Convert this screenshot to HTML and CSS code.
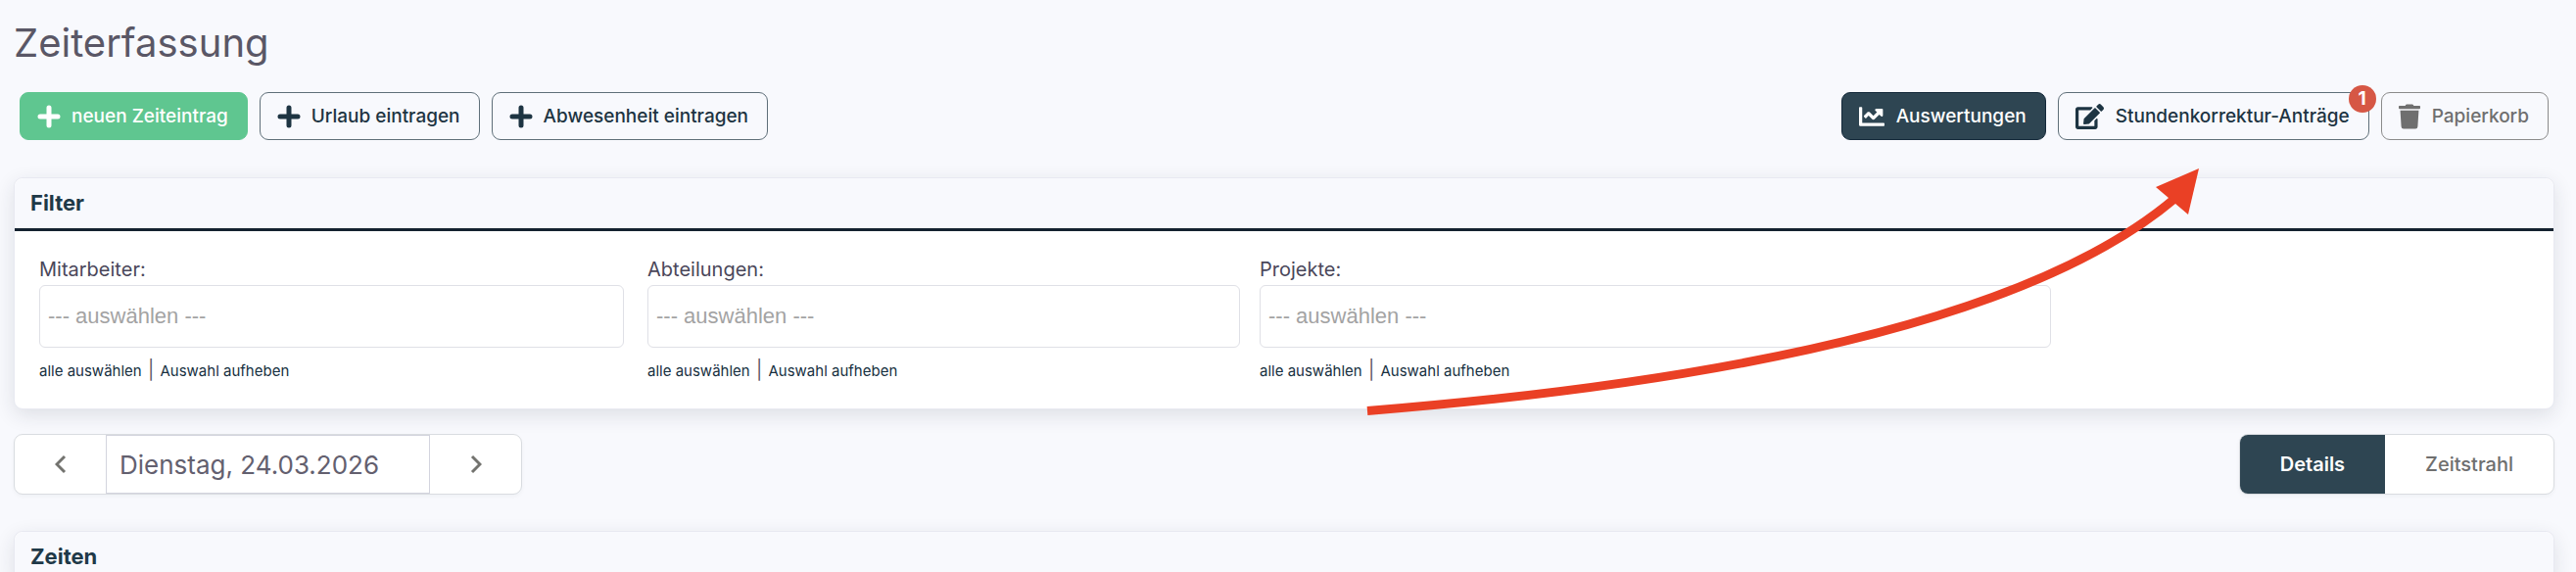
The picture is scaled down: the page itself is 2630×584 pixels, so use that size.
FILE: index.html
```html
<!DOCTYPE html>
<html lang="de">
<head>
<meta charset="utf-8">
<title>Zeiterfassung</title>
<link rel="stylesheet" href="styles.css">
</head>
<body>
<main class="page">
  <h1 class="title">Zeiterfassung</h1>

  <div class="toolbar">
    <button type="button" class="btn btn-success">
      <svg class="icon icon-plus" viewBox="0 0 24 24" aria-hidden="true"><path d="M12 3v18M3 12h18"/></svg>neuen Zeiteintrag
    </button>
    <button type="button" class="btn">
      <svg class="icon icon-plus" viewBox="0 0 24 24" aria-hidden="true"><path d="M12 3v18M3 12h18"/></svg>Urlaub eintragen
    </button>
    <button type="button" class="btn">
      <svg class="icon icon-plus" viewBox="0 0 24 24" aria-hidden="true"><path d="M12 3v18M3 12h18"/></svg>Abwesenheit eintragen
    </button>
    <span class="spacer"></span>
    <button type="button" class="btn btn-dark">
      <svg class="icon icon-chart" viewBox="0 0 512 512" aria-hidden="true"><path d="M496 384H64V80c0-8.840-7.160-16-16-16H16C7.160 64 0 71.160 0 80v336c0 17.670 14.330 32 32 32h464c8.840 0 16-7.160 16-16v-32c0-8.840-7.160-16-16-16zM464 96H345.940c-21.380 0-32.090 25.850-16.970 40.970l32.400 32.400L288 242.750l-73.370-73.370c-12.500-12.500-32.760-12.500-45.250 0l-68.690 68.690c-6.250 6.250-6.250 16.380 0 22.630l22.620 22.620c6.250 6.250 16.380 6.250 22.630 0L192 237.250l73.370 73.370c12.500 12.500 32.760 12.500 45.250 0l96-96 32.400 32.400c15.120 15.120 40.970 4.410 40.970-16.970V112c.010-8.840-7.150-16-15.990-16z"/></svg>Auswertungen
    </button>
    <button type="button" class="btn">
      <svg class="icon icon-edit" viewBox="0 0 576 512" aria-hidden="true"><path d="M402.600 83.200l90.200 90.200c3.800 3.800 3.800 10 0 13.800L274.400 405.600l-92.800 10.300c-12.400 1.400-22.900-9.100-21.500-21.500l10.300-92.800L388.800 83.200c3.800-3.800 10-3.800 13.800 0zm162-22.900l-48.800-48.800c-15.200-15.200-39.900-15.200-55.200 0l-35.400 35.400c-3.800 3.800-3.800 10 0 13.800l90.200 90.200c3.800 3.800 10 3.800 13.800 0l35.400-35.400c15.200-15.300 15.200-40 0-55.200zM384 346.200V448H64V128h229.800c3.200 0 6.200-1.300 8.500-3.500l40-40c7.600-7.600 2.200-20.500-8.500-20.500H48C21.500 64 0 85.500 0 112v352c0 26.500 21.500 48 48 48h352c26.500 0 48-21.500 48-48V306.200c0-10.700-12.900-16-20.500-8.500l-40 40c-2.200 2.300-3.500 5.300-3.500 8.500z"/></svg>Stundenkorrektur-Anträge
      <span class="badge">1</span>
    </button>
    <button type="button" class="btn btn-muted">
      <svg class="icon icon-trash" viewBox="0 0 448 512" aria-hidden="true"><path d="M432 32H312l-9.400-18.700A24 24 0 0 0 281.100 0H166.800a23.720 23.720 0 0 0-21.400 13.300L136 32H16A16 16 0 0 0 0 48v32a16 16 0 0 0 16 16h416a16 16 0 0 0 16-16V48a16 16 0 0 0-16-16zM32 128l21.200 339a48 48 0 0 0 47.900 45h245.800a48 48 0 0 0 47.900-45L416 128z"/></svg>Papierkorb
    </button>
  </div>

  <section class="card">
    <h2 class="card-head card-head-ruled">Filter</h2>
    <div class="filters">
      <div class="field">
        <label for="mitarbeiter">Mitarbeiter:</label>
        <input id="mitarbeiter" type="text" placeholder="--- auswählen ---">
        <p class="links"><a href="#">alle auswählen</a> <span class="sep">|</span> <a href="#">Auswahl aufheben</a></p>
      </div>
      <div class="field">
        <label for="abteilungen">Abteilungen:</label>
        <input id="abteilungen" type="text" placeholder="--- auswählen ---">
        <p class="links"><a href="#">alle auswählen</a> <span class="sep">|</span> <a href="#">Auswahl aufheben</a></p>
      </div>
      <div class="field">
        <label for="projekte">Projekte:</label>
        <input id="projekte" type="text" placeholder="--- auswählen ---">
        <p class="links"><a href="#">alle auswählen</a> <span class="sep">|</span> <a href="#">Auswahl aufheben</a></p>
      </div>
    </div>
  </section>

  <div class="daybar">
    <div class="group">
      <button type="button" class="step" aria-label="Vorheriger Tag"><svg class="chevron" viewBox="0 0 12 20" aria-hidden="true"><path d="M10 2L2 10l8 8"/></svg></button>
      <input class="date" type="text" aria-label="Datum" value="Dienstag, 24.03.2026">
      <button type="button" class="step" aria-label="Nächster Tag"><svg class="chevron" viewBox="0 0 12 20" aria-hidden="true"><path d="M2 2l8 8-8 8"/></svg></button>
    </div>
    <div class="group">
      <button type="button" class="tab tab-active">Details</button>
      <button type="button" class="tab">Zeitstrahl</button>
    </div>
  </div>

  <section class="card">
    <h2 class="card-head">Zeiten</h2>
  </section>

  <svg class="arrow" viewBox="1390 165 860 265" aria-hidden="true">
    <path class="arrow-line" d="M1396 419.500Q2024 369 2220 203"/>
    <path class="arrow-head" d="M2245 172L2201 191L2234 219Z"/>
  </svg>
</main>
</body>
</html>
```
FILE: styles.css
```css
* { box-sizing: border-box; }

body {
  margin: 0;
  background: #f8f9fd;
  color: #5a5766;
  font-family: Inter, "Liberation Sans", sans-serif;
  font-size: 20px;
}

button, input { font: inherit; color: inherit; margin: 0; }

.page {
  position: relative;
  min-height: 100vh;
  padding: 18px 22px 0 14px;
  overflow: hidden;
}

.title {
  margin: 0 0 24px;
  font-size: 40px;
  font-weight: 400;
  line-height: 52px;
}

.toolbar {
  display: flex;
  gap: 12px;
  padding: 0 6px;
  margin-bottom: 38px;
}

.spacer { flex: 1; }

.btn {
  position: relative;
  display: flex;
  align-items: center;
  height: 49px;
  padding: 0 19px 0 17px;
  border: 1px solid #5f6f79;
  border-radius: 9px;
  background: transparent;
  color: #1d3442;
  font-size: 19px;
  font-weight: 500;
  white-space: nowrap;
}

.btn-success { background: #5fc690; border-color: #5fc690; color: #fff; }
.btn-dark { background: #2e4552; border-color: #14293a; color: #fff; }
.btn-muted { border-color: #8b8b8b; color: #6f6f6f; }

.icon { height: 26px; margin-right: 12px; fill: currentColor; }
.icon-plus { width: 24px; height: 24px; margin-right: 11px; stroke: currentColor; stroke-width: 5; stroke-linecap: round; }
.icon-chart { width: 26px; }
.icon-edit { width: 29px; }
.icon-trash { width: 22px; }

.badge {
  position: absolute;
  top: -8px;
  right: -8px;
  width: 28px;
  height: 28px;
  border-radius: 50%;
  background: #d65745;
  color: #fff;
  font-size: 19px;
  font-weight: 700;
  line-height: 27px;
  text-align: center;
}

.card {
  border: 1px solid #e8e9f1;
  border-radius: 9px;
  background: #fff;
  box-shadow: 0 6px 20px rgba(30, 40, 60, 0.12);
}

.card-head {
  margin: 0;
  padding: 0 16px;
  border-radius: 9px 9px 0 0;
  background: #f8f9fd;
  color: #1f3948;
  font-size: 22px;
  font-weight: 700;
  line-height: 51px;
}

.card-head-ruled { border-bottom: 3px solid #142230; }

.filters {
  display: grid;
  grid-template-columns: 621fr 625fr 828fr 469fr;
  padding: 25px 24px 24px 25px;
}

.field { margin-right: 20px; }
.field:first-child { margin-right: 24px; }

.field label {
  display: block;
  margin-bottom: 2px;
  font-size: 20px;
  line-height: 28px;
  color: #4a475a;
}

.field input {
  display: block;
  width: 100%;
  height: 64px;
  padding: 0 8px;
  border: 1px solid #dfe0e6;
  border-radius: 6px;
  background: #fff;
  font-family: "Liberation Sans", Arial, sans-serif;
  font-size: 22px;
}

.field input::placeholder { color: #a3a3a3; opacity: 1; }

.links { margin: 9px 0 0; font-size: 15px; line-height: 28px; }
.links a { color: #17303f; text-decoration: none; }
.sep { margin: 0 2px; font-size: 19px; }

.daybar {
  display: flex;
  justify-content: space-between;
  margin: 25px 0 37px;
}

.group {
  display: flex;
  height: 62px;
  border: 1px solid #d9dce0;
  border-radius: 9px;
  background: #fff;
  overflow: hidden;
  box-shadow: 0 2px 4px rgba(30, 40, 60, 0.04);
}

.step, .tab {
  display: flex;
  align-items: center;
  justify-content: center;
  border: 0;
  background: transparent;
  color: #6f6f6f;
}

.step { width: 93px; padding: 0; }
.chevron { width: 12px; height: 20px; fill: none; stroke: #73736f; stroke-width: 3; }

.date {
  width: 331px;
  padding: 0 13px;
  border: 1px solid #d3d4de;
  background: #fff;
  color: #63606f;
  font-size: 26px;
}

.tab { padding: 0 41px; font-size: 20px; font-weight: 500; }
.tab-active { background: #2e4552; color: #fff; font-weight: 600; }

.arrow {
  position: absolute;
  left: 1390px;
  top: 165px;
  width: 860px;
  height: 265px;
  pointer-events: none;
}

.arrow-line { fill: none; stroke: #ea4025; stroke-width: 9; }
.arrow-head { fill: #ea4025; }
```
